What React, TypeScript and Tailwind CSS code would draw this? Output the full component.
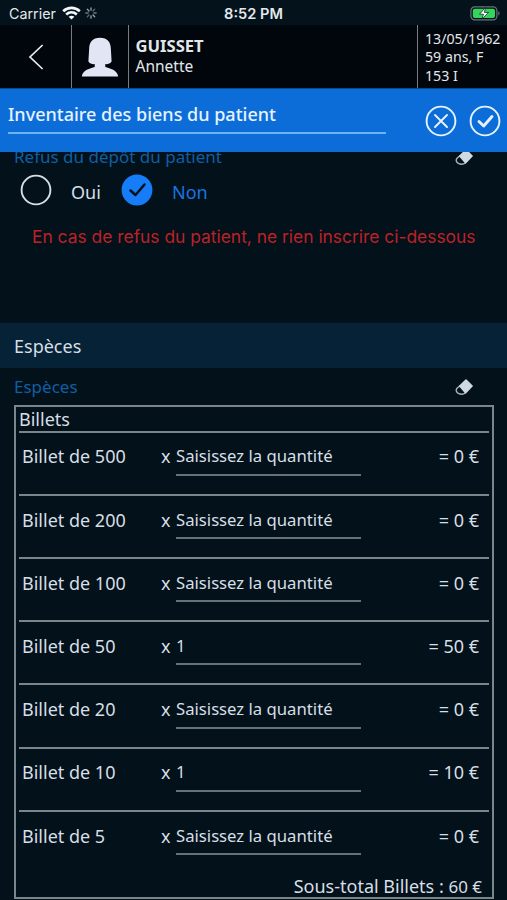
const BILLETS = [
  { id: 'b500', label: 'Billet de 500', quantity: '', total: 0 },
  { id: 'b200', label: 'Billet de 200', quantity: '', total: 0 },
  { id: 'b100', label: 'Billet de 100', quantity: '', total: 0 },
  { id: 'b50', label: 'Billet de 50', quantity: '1', total: 50 },
  { id: 'b20', label: 'Billet de 20', quantity: '', total: 0 },
  { id: 'b10', label: 'Billet de 10', quantity: '1', total: 10 },
  { id: 'b5', label: 'Billet de 5', quantity: '', total: 0 },
];

const Eraser = () => (
  <svg className="w-[18px] h-4 shrink-0" viewBox="0 0 18 16">
    <path d="M5 6.8 L2 9.2 C0.4 11.2 1.6 13.4 3.4 14.4 C5.8 15.6 8.6 15.4 10.6 13.8" fill="none" stroke="#a9b5bd" strokeWidth="1.4" />
    <path d="M11 1.2 L17 7 L10.6 13.6 L4.8 7 Z" fill="#cfdae3" strokeLinejoin="round" stroke="#cfdae3" strokeWidth="1.7" />
  </svg>
);

const StatusBar = () => (
  <div className="h-[25px] shrink-0 bg-[#03121b] flex items-center px-[9px] font-['Inter',sans-serif] text-[#e3e8eb]">
    <div className="flex-1 flex items-center pt-[2px]">
      <span className="text-[14.3px] leading-none pt-px">Carrier</span>
      <svg className="w-[19px] h-[14px] ml-[6px]" viewBox="0 0 19 14" fill="none" stroke="#f4f7f8" strokeWidth="2.7">
        <path d="M1.2 5.2 C6 0.7 13 0.7 17.8 5.2" />
        <path d="M4.2 8.4 C7.4 5.6 11.6 5.6 14.8 8.4" />
        <path d="M9.5 13.5 L6.6 10.7 C8.3 9.3 10.7 9.3 12.4 10.7 Z" fill="#f4f7f8" stroke="none" />
      </svg>
      <svg className="w-3 h-3 ml-1" viewBox="0 0 12 12" stroke="#9aa5ab" strokeWidth="1.3" strokeLinecap="round">
        <path d="M6 0.8V3.2M6 8.8V11.2" />
        <path d="M0.8 6H3.2M8.8 6H11.2" opacity="0.7" />
        <path d="M2.3 2.3L4 4M8 8L9.7 9.7" />
        <path d="M9.7 2.3L8 4M4 8L2.3 9.7" opacity="0.6" />
      </svg>
    </div>
    <span className="text-[14.6px] leading-none font-semibold pt-[3px]">8:52 PM</span>
    <div className="flex-1 flex justify-end pt-[2px]">
      <svg className="w-[31px] h-[15px] -mr-[3px]" viewBox="0 0 31 15">
        <rect x="0.9" y="0.9" width="26" height="13" rx="3.8" fill="none" stroke="#68757b" strokeWidth="1.2" />
        <rect x="2.8" y="2.8" width="22.2" height="9.2" rx="2" fill="#35d45b" />
        <path d="M28.3 5.2 C30 5.8 30 9 28.3 9.6Z" fill="#68757b" />
        <path d="M15.5 1.5 L9.5 8.2 H13.5 L12 13.2 L18.5 6.4 H14.4 Z" fill="#ffffff" stroke="#03121b" strokeWidth="0.7" />
      </svg>
    </div>
  </div>
);

const PatientHeader = () => (
  <div className="h-16 shrink-0 bg-[#01050c] border-b border-[#084a91] flex text-[#e2e7ea]">
    <div className="w-[71px] flex items-center justify-center">
      <svg className="w-4 h-[26px]" viewBox="0 0 16 26" fill="none" stroke="#e8edf0" strokeWidth="1.7">
        <path d="M14.6 1 L2 13 L14.6 25" />
      </svg>
    </div>
    <div className="w-[58px] border-x border-[#777d82] flex items-center justify-center">
      <svg className="w-[38px] h-10" viewBox="0 0 38 40" fill="#e2e5f3">
        <path d="M19 0.8 C11.5 0.8 8.4 5.4 8.2 11 L7.4 24.5 C8.6 26.8 11.4 27.3 13.7 27.1 L13.7 30 C9 31.4 1.6 33 0.8 39.4 H37.2 C36.4 33 29 31.4 24.3 30 L24.3 27.1 C26.6 27.3 29.4 26.8 30.6 24.5 L29.8 11 C29.6 5.4 26.5 0.8 19 0.8 Z" />
      </svg>
    </div>
    <div className="flex-1 pt-[11px] pl-[6.5px] leading-5">
      <div className="text-[16.6px] font-bold">GUISSET</div>
      <div className="text-[15.5px]">Annette</div>
    </div>
    <div className="w-[90px] border-l border-[#777d82] pt-[5px] pl-[7px] text-[14.2px] leading-[18.3px] whitespace-nowrap">
      <div>13/05/1962</div>
      <div>59 ans, F</div>
      <div>153 I</div>
    </div>
  </div>
);

const FormTitle = () => (
  <div className="h-[63px] shrink-0 bg-[#0d6dd8] flex items-start pl-2 pr-[6px] text-[#e6f3ff]">
    <div className="w-[378px] h-[45px] border-b-2 border-[#6fb1f5] pt-[13px]">
      <h1 className="text-[18px] leading-6 font-medium whitespace-nowrap">Inventaire des biens du patient</h1>
    </div>
    <div className="flex-1 flex justify-end gap-3 pt-[16px]">
      <svg className="w-8 h-8" viewBox="0 0 32 32" fill="none" stroke="#e6f3ff" strokeWidth="1.9" strokeLinecap="round">
        <circle cx="16" cy="16" r="14.4" />
        <path d="M10 10 L22 22 M22 10 L10 22" />
      </svg>
      <svg className="w-8 h-8" viewBox="0 0 32 32" fill="none" stroke="#e6f3ff" strokeLinecap="round" strokeLinejoin="round">
        <circle cx="16" cy="16" r="14.4" strokeWidth="1.9" />
        <path d="M10 16.5 L14.7 21 L23 11.5" strokeWidth="2.9" />
      </svg>
    </div>
  </div>
);

export default function App() {
  return (
    <div className="w-[507px] h-[900px] overflow-hidden flex flex-col bg-[#03111a] font-['Noto_Sans',sans-serif] text-[#d6dfe5]">
      <StatusBar />
      <PatientHeader />
      <FormTitle />

      {/* scrolled content, first line is cut by the title bar */}
      <div className="h-[171px] shrink-0 overflow-hidden">
        <div className="h-[22px] -mt-[6px] flex items-center justify-between pl-[14px] pr-[34px]">
          <span className="text-[17px] leading-[22px] text-[#0f5fa3]">Refus du dépôt du patient</span>
          <Eraser />
        </div>
        <div className="flex items-center h-8 mt-[6px] pl-5 text-[18px]">
          <svg className="w-8 h-8" viewBox="0 0 32 32" fill="none" stroke="#d6dfe5" strokeWidth="1.9">
            <circle cx="16" cy="16" r="14.4" />
          </svg>
          <span className="w-[69px] pl-[19px] pt-[5px]">Oui</span>
          <svg className="w-8 h-8" viewBox="0 0 32 32" fill="none">
            <circle cx="16" cy="16" r="15.4" fill="#167cf8" />
            <path d="M9.5 16.5 L14.5 21 L23.5 10.5" stroke="#03111a" strokeWidth="2.5" strokeLinecap="round" strokeLinejoin="round" />
          </svg>
          <span className="pl-[19px] pt-[5px] text-[#1876e3]">Non</span>
        </div>
        <p className="mt-[19px] pl-8 font-['Inter',sans-serif] text-[17.4px] leading-6 text-[#bd2127] whitespace-nowrap">
          En cas de refus du patient, ne rien inscrire ci-dessous
        </p>
      </div>

      <h2 className="h-[45px] shrink-0 bg-[#062237] flex items-center pl-[14px] pt-[2px] text-[18px]">Espèces</h2>

      <div className="h-[37px] shrink-0 flex items-center justify-between pl-[14px] pr-[34px]">
        <span className="text-[17px] text-[#0f5fa3] pt-px">Espèces</span>
        <Eraser />
      </div>

      <div className="h-[494px] shrink-0 ml-[14px] mr-[13px] border-2 border-[#7b868b] flex flex-col px-[3px] text-[18px]">
        <div className="h-[25.6px] shrink-0 border-b-2 border-[#7b868b] leading-[24px]">Billets</div>
        {BILLETS.map((billet) => (
          <div key={billet.id} className="h-[63.2px] shrink-0 flex items-start pl-[3px] pr-[10px] pt-[11.8px] border-b-2 border-[#7b868b] last-of-type:border-0 leading-6">
            <span className="w-[139px]">{billet.label}</span>
            <span className="w-[15px]">x</span>
            <span className="w-[185px] h-[31.4px] border-b-2 border-[#66727a] text-[16.7px] leading-[23px]">
              {billet.quantity || 'Saisissez la quantité'}
            </span>
            <span className="flex-1 text-right">= {billet.total} €</span>
          </div>
        ))}
        <p className="text-right pr-[7px] -mt-px leading-6 whitespace-nowrap">
          Sous-total Billets : <span className="text-[17px]">60 €</span>
        </p>
      </div>
    </div>
  );
}
